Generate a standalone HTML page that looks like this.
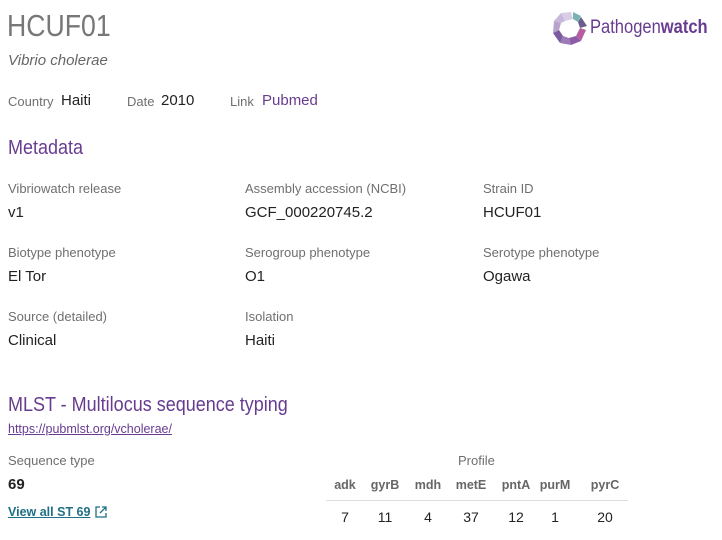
<!DOCTYPE html>
<html><head><meta charset="utf-8"><style>
*{margin:0;padding:0;box-sizing:border-box}
body{width:722px;height:540px;background:#fff;font-family:"Liberation Sans",sans-serif;position:relative;overflow:hidden;color:#222}
.a{position:absolute;white-space:nowrap}
.lab{font-size:13px;color:#6f6f6f}
.val{font-size:15px;color:#222}
.h{font-size:20px;color:#673c90;transform:scaleX(0.9);transform-origin:0 0}
.th{font-size:12.5px;color:#666;font-weight:bold;text-align:center;width:40px}
.td{font-size:14px;color:#222;text-align:center;width:40px}
</style></head><body>
<div class="a" style="left:7px;top:8px;font-size:31px;color:#777;transform:scaleX(0.86);transform-origin:0 0">HCUF01</div>
<div class="a" style="left:8px;top:52px;font-size:15px;font-style:italic;color:#666">Vibrio cholerae</div>
<svg class="a" style="left:551px;top:10px" width="38" height="36" viewBox="0 0 38 36">
<path d="M10 3 L20 2 L22 9 L14 11Z" fill="#d8cde6"/>
<path d="M22 2 L30 6 L27 12 L22 9Z" fill="#7ab3b5"/>
<path d="M30 7 L36 16 L29 18 L27 12Z" fill="#6a5d8c"/>
<path d="M29 18 L35 20 L30 31 L25 26Z" fill="#b45ea0"/>
<path d="M25 26 L30 31 L20 35 L18 28Z" fill="#8d5aa6"/>
<path d="M18 28 L20 35 L9 33 L12 26Z" fill="#9c7bb8"/>
<path d="M12 26 L9 33 L2 23 L8 20Z" fill="#7c5b9e"/>
<path d="M8 20 L2 23 L3 11 L10 13Z" fill="#b7a3cc"/>
<path d="M3 11 L10 3 L14 11 L10 13Z" fill="#c9b8dc"/>
</svg>
<div class="a" style="left:590px;top:17px;font-size:19px;color:#673c90;transform:scaleX(0.87);transform-origin:0 0">Pathogen<b>watch</b></div>
<div class="a lab" style="left:8px;top:94px">Country</div>
<div class="a val" style="left:61px;top:92px">Haiti</div>
<div class="a lab" style="left:127px;top:94px">Date</div>
<div class="a val" style="left:161px;top:92px">2010</div>
<div class="a lab" style="left:230px;top:94px">Link</div>
<div class="a val" style="left:262px;top:92px;color:#673c90">Pubmed</div>
<div class="a h" style="left:8px;top:137px">Metadata</div>
<div class="a lab" style="left:8px;top:181px">Vibriowatch release</div>
<div class="a val" style="left:8px;top:204px">v1</div>
<div class="a lab" style="left:245px;top:181px">Assembly accession (NCBI)</div>
<div class="a val" style="left:245px;top:204px">GCF_000220745.2</div>
<div class="a lab" style="left:483px;top:181px">Strain ID</div>
<div class="a val" style="left:483px;top:204px">HCUF01</div>
<div class="a lab" style="left:8px;top:245px">Biotype phenotype</div>
<div class="a val" style="left:8px;top:268px">El Tor</div>
<div class="a lab" style="left:245px;top:245px">Serogroup phenotype</div>
<div class="a val" style="left:245px;top:268px">O1</div>
<div class="a lab" style="left:483px;top:245px">Serotype phenotype</div>
<div class="a val" style="left:483px;top:268px">Ogawa</div>
<div class="a lab" style="left:8px;top:309px">Source (detailed)</div>
<div class="a val" style="left:8px;top:332px">Clinical</div>
<div class="a lab" style="left:245px;top:309px">Isolation</div>
<div class="a val" style="left:245px;top:332px">Haiti</div>
<div class="a h" style="left:8px;top:394px">MLST - Multilocus sequence typing</div>
<div class="a" style="left:8px;top:422px;font-size:12.5px;color:#673c90;text-decoration:underline">https://pubmlst.org/vcholerae/</div>
<div class="a lab" style="left:8px;top:453px">Sequence type</div>
<div class="a val" style="left:8px;top:476px;font-weight:bold">69</div>
<div class="a" style="left:8px;top:505px;font-size:12.5px;color:#1f6f86;font-weight:bold;text-decoration:underline">View all ST 69</div>
<svg class="a" style="left:95px;top:506px" width="12" height="12" viewBox="0 0 12 12" fill="none" stroke="#1f6f86" stroke-width="1.3"><path d="M5 1H1v10h10V7M7 1h4v4M11 1 5 7"/></svg>
<div class="a lab" style="left:458px;top:453px">Profile</div>
<div class="a th" style="left:325px;top:478px">adk</div>
<div class="a th" style="left:365px;top:478px">gyrB</div>
<div class="a th" style="left:408px;top:478px">mdh</div>
<div class="a th" style="left:451px;top:478px">metE</div>
<div class="a th" style="left:496px;top:478px">pntA</div>
<div class="a th" style="left:535px;top:478px">purM</div>
<div class="a th" style="left:585px;top:478px">pyrC</div>
<div class="a" style="left:326px;top:500px;width:302px;height:1px;background:#ddd"></div>
<div class="a td" style="left:325px;top:509px">7</div>
<div class="a td" style="left:365px;top:509px">11</div>
<div class="a td" style="left:408px;top:509px">4</div>
<div class="a td" style="left:451px;top:509px">37</div>
<div class="a td" style="left:496px;top:509px">12</div>
<div class="a td" style="left:535px;top:509px">1</div>
<div class="a td" style="left:585px;top:509px">20</div>
</body></html>
